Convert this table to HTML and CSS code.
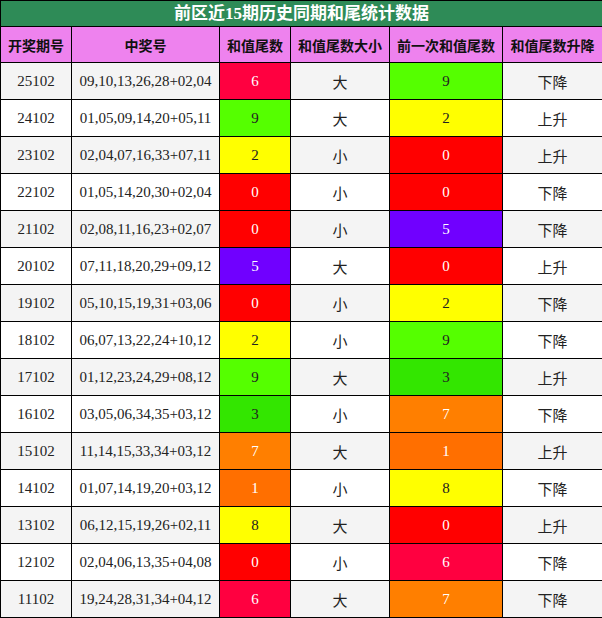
FILE: index.html
```html
<!DOCTYPE html>
<html lang="zh">
<head>
<meta charset="utf-8">
<title>前区近15期历史同期和尾统计数据</title>
<link rel="stylesheet" href="styles.css">
</head>
<body>
<table class="stats">
  <colgroup>
    <col class="c1"><col class="c2"><col class="c3"><col class="c4"><col class="c5"><col class="c6">
  </colgroup>
  <thead>
    <tr class="title-row"><th colspan="6">前区近15期历史同期和尾统计数据</th></tr>
    <tr class="head-row">
      <th>开奖期号</th><th>中奖号</th><th>和值尾数</th><th>和值尾数大小</th><th>前一次和值尾数</th><th>和值尾数升降</th>
    </tr>
  </thead>
  <tbody>
    <tr><td>25102</td><td>09,10,13,26,28+02,04</td><td class="v6">6</td><td>大</td><td class="v9">9</td><td>下降</td></tr>
    <tr><td>24102</td><td>01,05,09,14,20+05,11</td><td class="v9">9</td><td>大</td><td class="v2">2</td><td>上升</td></tr>
    <tr><td>23102</td><td>02,04,07,16,33+07,11</td><td class="v2">2</td><td>小</td><td class="v0">0</td><td>上升</td></tr>
    <tr><td>22102</td><td>01,05,14,20,30+02,04</td><td class="v0">0</td><td>小</td><td class="v0">0</td><td>下降</td></tr>
    <tr><td>21102</td><td>02,08,11,16,23+02,07</td><td class="v0">0</td><td>小</td><td class="v5">5</td><td>下降</td></tr>
    <tr><td>20102</td><td>07,11,18,20,29+09,12</td><td class="v5">5</td><td>大</td><td class="v0">0</td><td>上升</td></tr>
    <tr><td>19102</td><td>05,10,15,19,31+03,06</td><td class="v0">0</td><td>小</td><td class="v2">2</td><td>下降</td></tr>
    <tr><td>18102</td><td>06,07,13,22,24+10,12</td><td class="v2">2</td><td>小</td><td class="v9">9</td><td>下降</td></tr>
    <tr><td>17102</td><td>01,12,23,24,29+08,12</td><td class="v9">9</td><td>大</td><td class="v3">3</td><td>上升</td></tr>
    <tr><td>16102</td><td>03,05,06,34,35+03,12</td><td class="v3">3</td><td>小</td><td class="v7">7</td><td>下降</td></tr>
    <tr><td>15102</td><td>11,14,15,33,34+03,12</td><td class="v7">7</td><td>大</td><td class="v1">1</td><td>上升</td></tr>
    <tr><td>14102</td><td>01,07,14,19,20+03,12</td><td class="v1">1</td><td>小</td><td class="v8">8</td><td>下降</td></tr>
    <tr><td>13102</td><td>06,12,15,19,26+02,11</td><td class="v8">8</td><td>大</td><td class="v0">0</td><td>上升</td></tr>
    <tr><td>12102</td><td>02,04,06,13,35+04,08</td><td class="v0">0</td><td>小</td><td class="v6">6</td><td>下降</td></tr>
    <tr><td>11102</td><td>19,24,28,31,34+04,12</td><td class="v6">6</td><td>大</td><td class="v7">7</td><td>下降</td></tr>
  </tbody>
</table>
</body>
</html>
```
FILE: styles.css
```css
html, body {
  margin: 0;
  padding: 0;
  background: #ffffff;
}
.stats {
  width: 602px;
  border-collapse: collapse;
  table-layout: fixed;
  font-family: "Liberation Serif", "Noto Sans CJK SC", serif;
  color: #222222;
}
.c1 { width: 71px; }
.c2 { width: 148px; }
.c3 { width: 71px; }
.c4 { width: 99px; }
.c5 { width: 113px; }
.c6 { width: 100px; }
.stats th, .stats td {
  border: 1px solid #000000;
  padding: 0;
  text-align: center;
  vertical-align: middle;
}
.title-row th {
  height: 25px;
  background: #2e8b57;
  color: #ffffff;
  font-size: 17px;
  font-weight: bold;
  line-height: 25px;
}
.head-row th {
  height: 35px;
  background: #ee82ee;
  color: #111111;
  font-size: 14px;
  font-weight: bold;
}
.stats td {
  height: 36px;
  font-size: 15px;
}
.stats tbody tr:nth-child(odd) td { background: #f4f4f4; }
.stats tbody tr:nth-child(even) td { background: #ffffff; }
.stats tbody tr td.v0 { background: #ff0000; color: #ffffff; }
.stats tbody tr td.v1 { background: #ff6f00; color: #ffffff; }
.stats tbody tr td.v2 { background: #ffff00; color: #222222; }
.stats tbody tr td.v3 { background: #33e600; color: #222222; }
.stats tbody tr td.v5 { background: #7000ff; color: #ffffff; }
.stats tbody tr td.v6 { background: #ff0040; color: #ffffff; }
.stats tbody tr td.v7 { background: #ff7f00; color: #ffffff; }
.stats tbody tr td.v8 { background: #ffff00; color: #222222; }
.stats tbody tr td.v9 { background: #55ff00; color: #222222; }
```
